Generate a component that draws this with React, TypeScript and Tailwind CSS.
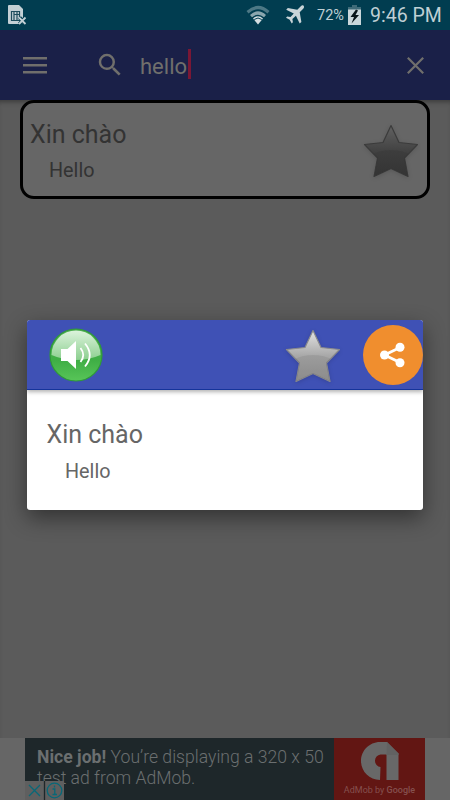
import React from 'react';

interface StarProps {
  id: string;
  top: string;
  mid: string;
  bottom: string;
  stroke: string;
}

function Star({ id, top, mid, bottom, stroke }: StarProps) {
  const shape = 'M28 2.5 L36 19.5 L54.5 21.5 L41.5 35 L45 53.5 L28 45.5 L11 53.5 L14.5 35 L1.5 21.5 L20 19.5 Z';
  return (
    <svg width="56" height="57" viewBox="0 0 56 57" className="shrink-0 drop-shadow-sm">
      <defs>
        <linearGradient id={`${id}-fill`} x1="0" y1="0" x2="0" y2="1">
          <stop offset="0" stopColor={top} />
          <stop offset="0.5" stopColor={mid} />
          <stop offset="1" stopColor={bottom} />
        </linearGradient>
        <clipPath id={`${id}-clip`}>
          <path d={shape} />
        </clipPath>
      </defs>
      <path d={shape} fill={`url(#${id}-fill)`} stroke={stroke} strokeWidth="1.2" strokeLinejoin="round" />
      <ellipse cx="28" cy="44" rx="28" ry="17" fill="#000" opacity="0.07" clipPath={`url(#${id}-clip)`} />
    </svg>
  );
}

function StatusBar() {
  return (
    <div className="flex h-[30px] items-center bg-[#013d50] pl-2 text-[#bfcfd4]">
      <svg width="19" height="20" viewBox="0 0 19 20">
        <path d="M1 0h10l4 4v15H1a1 1 0 0 1-1-1V1a1 1 0 0 1 1-1z" fill="#c3d0d5" />
        <path d="M3.5 6.5h8v9h-8zM6 6.5v9M6 9.5h5.5M9 6.5v9" fill="none" stroke="#1d4d5d" strokeWidth="1.2" />
        <path d="M11.5 12.5l6 6.5M17.5 12.5l-6 6.5" stroke="#013d50" strokeWidth="4" />
        <path d="M11 12.5l6.5 6.5M17.5 12.5l-6.5 6.5" stroke="#c3d0d5" strokeWidth="1.8" />
      </svg>
      <svg width="24" height="20" viewBox="0 0 24 20" className="ml-[219px]">
        <path d="M.5 6Q12-4.5 23.5 6l-2 2.5Q12 0 2.5 8.5z" fill="#4d7885" />
        <path d="M4 10Q12 2.5 20 10l-2 2.3Q12 7 6 12.3z" fill="#8aa6ae" />
        <path d="M7 13.5Q12 9 17 13.5l-5 6z" fill="#d5dfe2" />
        <path d="M8.2 14.5Q12 11.5 15.8 14.5" fill="none" stroke="#013d50" strokeWidth="1" />
      </svg>
      <svg width="20" height="20" viewBox="0 0 20 20" className="ml-[15px]">
        <path
          d="M18.6.8c.8.8.5 2-.4 2.900L14.700 7.200 16.400 17l-1.700 1.600-3.800-7.800L7.400 14l.5 3.300-1.200 1.200-2-3.800L1 12.700l1.200-1.200 3.300.4L8.800 8.500 1.200 4.800l1.600-1.700 9.500 1.600L15.800 1.200c.9-.9 2.100-1.200 2.800-.4z"
          fill="#c8d4d8"
        />
      </svg>
      <span className="mt-0.5 ml-[12px] w-[28px] text-[14.5px]">72%</span>
      <svg width="13" height="20" viewBox="0 0 13 20" className="ml-[3px]">
        <path d="M4 0h5v2h4v6H0V2h4z" fill="#3f6b79" />
        <path d="M0 4.5h13V20H0z" fill="#cad6da" />
        <path d="M8 4.500L2.500 12h3.500L3.500 18.500l7.500-8.500H7.500l2.500-4.500z" fill="#081418" />
      </svg>
      <span className="mt-0.5 ml-[9px] text-[19.5px] whitespace-nowrap">9:46 PM</span>
    </div>
  );
}

function SearchBar() {
  return (
    <div className="flex h-[70px] items-center bg-[#1a2048] pl-[23px] text-[#706f6c]">
      <svg width="24" height="17" viewBox="0 0 24 17" fill="currentColor">
        <path d="M0 0h24v2.5H0zM0 7h24v2.5H0zM0 14h24v2.5H0z" />
      </svg>
      <svg width="30" height="30" viewBox="0 0 24 24" fill="currentColor" className="ml-12">
        <path d="M15.5 14h-.79l-.28-.27A6.47 6.47 0 0 0 16 9.5 6.5 6.5 0 1 0 9.5 16c1.61 0 3.09-.59 4.23-1.57l.27.28v.79l5 4.99L20.49 19l-4.99-5zm-6 0C7.01 14 5 11.99 5 9.5S7.01 5 9.5 5 14 7.01 14 9.5 11.99 14 9.5 14z" />
      </svg>
      <span className="mt-[3px] ml-[15px] w-[48px] text-[22px]">hello</span>
      <span className="-mt-0.5 h-[30px] w-[3px] bg-[#7a1735]" />
      <svg width="17" height="17" viewBox="0 0 17 17" className="ml-[215.5px]">
        <path d="M.8.8l15.4 15.4M16.2.8L.8 16.2" stroke="currentColor" strokeWidth="2.2" />
      </svg>
    </div>
  );
}

function SpeakerButton() {
  return (
    <svg width="54" height="54" viewBox="0 0 54 54">
      <defs>
        <linearGradient id="speaker-base" x1="0" y1="0" x2="0" y2="1">
          <stop offset="0" stopColor="#4eae50" />
          <stop offset="0.6" stopColor="#3fae45" />
          <stop offset="1" stopColor="#58c558" />
        </linearGradient>
        <linearGradient id="speaker-gloss" x1="0" y1="0" x2="0" y2="1">
          <stop offset="0" stopColor="#dcf3dc" />
          <stop offset="1" stopColor="#8ccf8f" />
        </linearGradient>
      </defs>
      <circle cx="27" cy="27" r="26" fill="url(#speaker-base)" stroke="#2f9a38" strokeWidth="1.2" />
      <path d="M2.5 27a24.5 24.5 0 0 1 49 0Q40 32 27 32T2.5 27z" fill="url(#speaker-gloss)" />
      <path d="M12 21h6.5L27 13v28l-8.500-8H12z" fill="#fff" />
      <path d="M31.5 20q5.500 7 0 14M36 15.500q9.500 11.500 0 23" fill="none" stroke="#fff" strokeWidth="1.8" />
    </svg>
  );
}

function ShareButton() {
  return (
    <div className="flex size-[60px] items-center justify-center rounded-full bg-[#f08e2e]">
      <svg width="26" height="26" viewBox="0 0 26 26">
        <path d="M20 5.500L4.500 13 20 20.500" fill="none" stroke="#fff" strokeWidth="2.8" />
        <circle cx="4.500" cy="13" r="4.500" fill="#fff" />
        <circle cx="20" cy="5.300" r="4.500" fill="#fff" />
        <circle cx="20" cy="20.700" r="4.500" fill="#fff" />
      </svg>
    </div>
  );
}

function PhraseDialog() {
  return (
    <div className="absolute top-80 left-[26.5px] h-[190px] w-[396.5px] overflow-hidden rounded-[3px] bg-white shadow-[0_8px_22px_rgba(0,0,0,0.45)]">
      <div className="flex h-[70px] items-center border-b border-[#15349b] bg-[#3f51b5] pl-[22.5px] shadow-[0_2px_4px_rgba(0,0,0,0.3)]">
        <SpeakerButton />
        <div className="mt-1 ml-[182px]">
          <Star id="dialog-star" top="#e4e4e4" mid="#a8a8a8" bottom="#969696" stroke="#8b8b8b" />
        </div>
        <div className="ml-[21.5px]">
          <ShareButton />
        </div>
      </div>
      <div className="pt-[29px] pl-5 text-[#666]">
        <div className="text-[25px] leading-8">Xin chào</div>
        <div className="mt-[9px] pl-[18.5px] text-[19.8px] leading-6">Hello</div>
      </div>
    </div>
  );
}

function AdBanner() {
  return (
    <div className="flex h-[62px] bg-[#666] pl-[25px]">
      <div className="relative w-[309px] bg-[#1e272a] pt-[9px] pl-3 text-[17.6px] leading-[21px] font-light whitespace-nowrap text-[#6b6f70]">
        <b className="font-bold">Nice job!</b> You’re displaying a 320 x 50
        <br />
        test ad from AdMob.
        <div className="absolute bottom-0 left-0 flex h-[19px] w-[39px] items-center bg-[#5f5f5f]">
          <svg width="39" height="19" viewBox="0 0 39 19" fill="none" stroke="#086878" strokeWidth="1.3">
            <path d="M4 4l11 11M15 4L4 15" />
            <path d="M19.5 0v19" stroke="#1e272a" />
            <circle cx="29.5" cy="9.5" r="7.3" />
            <path d="M27.5 8h2.300v5.500M27.500 13.500h4.500M29.500 4.500v2" />
          </svg>
        </div>
      </div>
      <div className="flex w-[91px] flex-col items-center bg-[#621613] pt-1">
        <svg width="38" height="38" viewBox="0 0 38 38">
          <path d="M19 38C8 38 0 29 0 19S8 0 19 0h7l11.500 11.500V38h-12V12.500h-6a6.300 6.300 0 0 0 0 12.500z" fill="#686868" />
          <path d="M26 0l11.500 11.500V13H25.500z" fill="#626262" />
        </svg>
        <span className="mt-1 text-[9px] leading-3 whitespace-nowrap text-[#85504e]">
          AdMob by <span className="font-medium">Google</span>
        </span>
      </div>
    </div>
  );
}

export default function App() {
  return (
    <div className="relative flex h-[800px] w-[450px] flex-col overflow-hidden bg-[#5b5b5b] font-['Roboto',sans-serif]">
      <StatusBar />
      <SearchBar />
      <div className="flex-1 px-5 shadow-[inset_0_5px_5px_-3px_rgba(0,0,0,0.35)]">
        <div className="flex h-[99px] items-center justify-between rounded-[14px] border-[3.5px] border-black bg-[#666] pr-2 pl-[7px] text-[#333]">
          <div className="mt-[3px]">
            <div className="text-[25px] leading-8">Xin chào</div>
            <div className="mt-2 pl-[19px] text-[19.8px] leading-6">Hello</div>
          </div>
          <div className="mt-1">
            <Star id="list-star" top="#626262" mid="#424242" bottom="#393939" stroke="#3b3b3b" />
          </div>
        </div>
      </div>
      <AdBanner />
      <PhraseDialog />
    </div>
  );
}
